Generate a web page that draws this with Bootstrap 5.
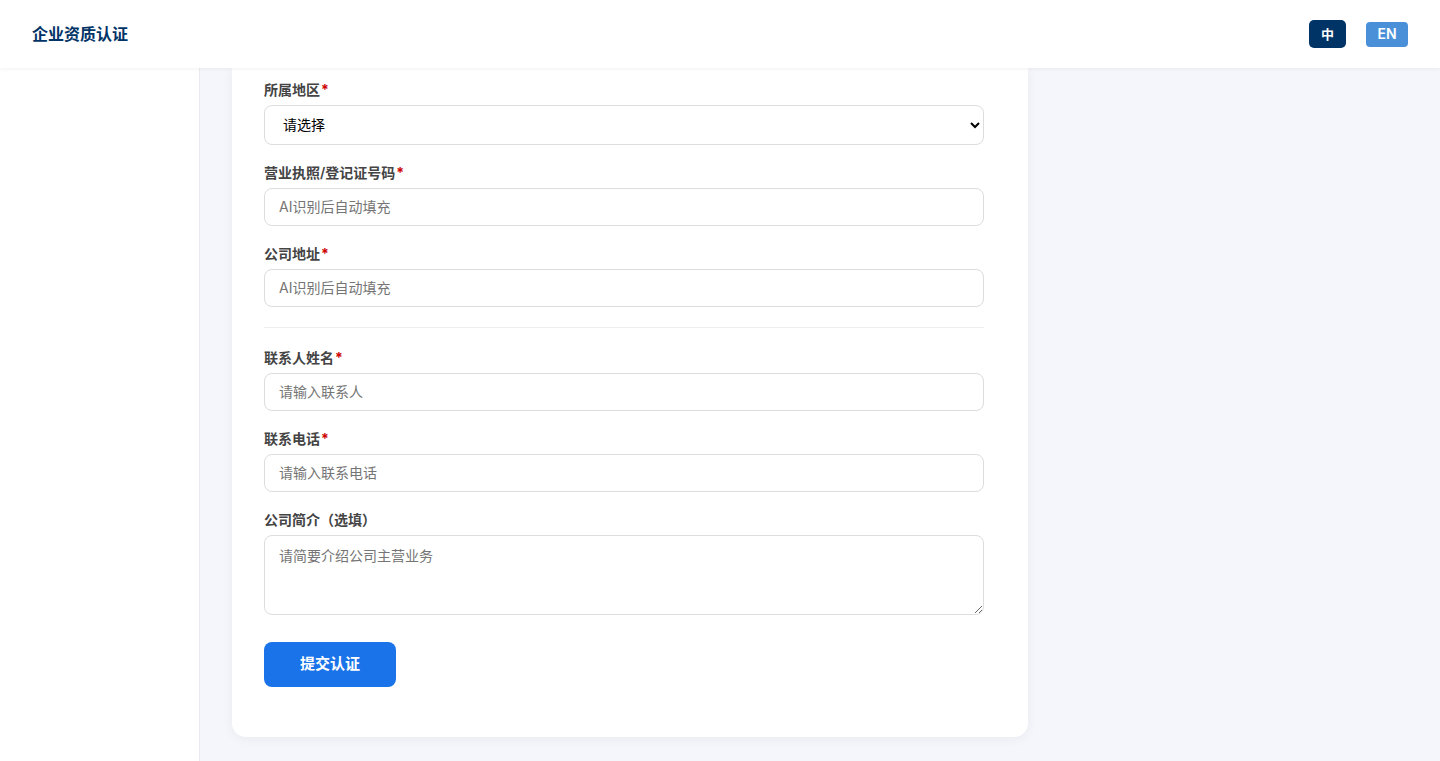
<!DOCTYPE html>
<html lang="zh-CN">
<head>
  <meta charset="UTF-8">
  <title>企业资质认证</title>
  <meta name="viewport" content="width=device-width, initial-scale=1">
  <link href="https://cdn.jsdelivr.net/npm/bootstrap@5.3.0/dist/css/bootstrap.min.css" rel="stylesheet">
  <style>
    html, body { height: 100%; }
    body {
      font-family: Inter, "Noto Sans CJK SC", sans-serif;
      background: #f4f6fb;
      overflow: hidden;
    }
    .top-bar {
      height: 68px;
      padding: 0 32px;
      background: #fff;
      box-shadow: 0 1px 4px rgba(0, 0, 0, .06);
      position: relative;
      z-index: 2;
    }
    .brand-title { font-size: 16px; font-weight: 700; color: #003366; }
    .lang-btn {
      border: 0;
      color: #fff;
      font-weight: 600;
      border-radius: 4px;
      line-height: 1;
      padding: 0;
    }
    .lang-zh { width: 37px; height: 28px; font-size: 13px; background: #003366; border-radius: 5px; }
    .lang-en { width: 42px; height: 25px; font-size: 14px; background: #4a90d9; margin-left: 20px; }
    .page-body { height: 693px; }
    .side-col { width: 200px; background: #fff; border-right: 1px solid #e8eaf0; flex-shrink: 0; }
    .main-col { padding: 0 32px 24px; }
    .form-panel {
      width: 796px;
      padding: 12px 44px 50px 32px;
      background: #fff;
      border-radius: 0 0 14px 14px;
      box-shadow: 0 2px 12px rgba(0, 0, 0, .05);
    }
    .field-label {
      display: block;
      font-size: 14px;
      font-weight: 600;
      line-height: 20px;
      color: #444;
      margin-bottom: 5px;
    }
    .req { color: #c00; font-weight: 700; margin-left: 1px; }
    .field-input.form-control {
      height: 38px;
      padding: 0 14px 2px;
      font-size: 14px;
      border: 1px solid #ddd;
      border-radius: 8px;
      color: #000;
    }
    .field-input.form-control::placeholder { color: #757575; opacity: 1; }
    select.field-input.form-control {
      height: 40px;
      padding: 0 11px 2px 14px;
      appearance: auto;
      -webkit-appearance: auto;
      background-color: #fff;
    }
    textarea.field-input.form-control {
      display: block;
      height: 80px;
      padding: 10px 14px;
      line-height: 20px;
      resize: vertical;
    }
    .field-wrap { margin-bottom: 18px; }
    .field-rule { margin: 20px 0 20px; height: 1px; background: #eee; }
    .submit-btn {
      width: 132px;
      height: 45px;
      margin-top: 9px;
      padding: 0;
      background: #1a73e8;
      border: 0;
      border-radius: 8px;
      color: #fff;
      font-size: 15px;
      font-weight: 700;
    }
  </style>
</head>
<body>
  <header class="top-bar d-flex align-items-center justify-content-between">
    <div class="brand-title">企业资质认证</div>
    <div class="d-flex align-items-center">
      <button type="button" class="lang-btn lang-zh">中</button>
      <button type="button" class="lang-btn lang-en">EN</button>
    </div>
  </header>

  <div class="page-body d-flex">
    <aside class="side-col"></aside>
    <main class="main-col flex-grow-1 d-flex flex-column justify-content-end">
      <form class="form-panel">
        <div class="field-wrap">
          <label class="field-label">所属地区<span class="req">*</span></label>
          <select class="field-input form-control"><option>请选择</option></select>
        </div>
        <div class="field-wrap">
          <label class="field-label">营业执照/登记证号码<span class="req">*</span></label>
          <input class="field-input form-control" placeholder="AI识别后自动填充">
        </div>
        <div>
          <label class="field-label">公司地址<span class="req">*</span></label>
          <input class="field-input form-control" placeholder="AI识别后自动填充">
        </div>
        <div class="field-rule"></div>
        <div class="field-wrap">
          <label class="field-label">联系人姓名<span class="req">*</span></label>
          <input class="field-input form-control" placeholder="请输入联系人">
        </div>
        <div class="field-wrap">
          <label class="field-label">联系电话<span class="req">*</span></label>
          <input class="field-input form-control" placeholder="请输入联系电话">
        </div>
        <div class="field-wrap">
          <label class="field-label">公司简介（选填）</label>
          <textarea class="field-input form-control" placeholder="请简要介绍公司主营业务"></textarea>
        </div>
        <button type="button" class="submit-btn">提交认证</button>
      </form>
    </main>
  </div>

  <script src="https://cdn.jsdelivr.net/npm/bootstrap@5.3.0/dist/js/bootstrap.bundle.min.js"></script>
</body>
</html>
